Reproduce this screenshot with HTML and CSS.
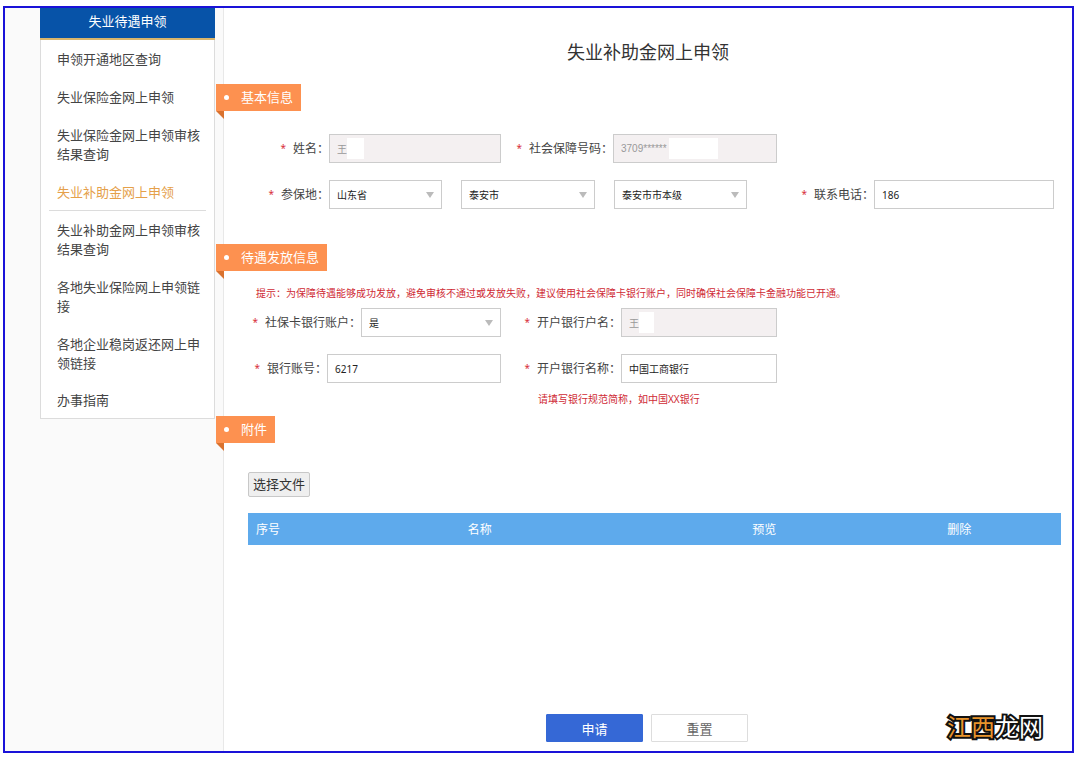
FILE: index.html
```html
<!DOCTYPE html>
<html lang="zh-CN">
<head>
<meta charset="utf-8">
<title>失业补助金网上申领</title>
<link rel="stylesheet" href="styles.css">
</head>
<body>
<div class="frame">
  <aside class="sidebar">
    <nav class="menu">
      <h2 class="menu-title">失业待遇申领</h2>
      <ul class="menu-list">
        <li><a href="#">申领开通地区查询</a></li>
        <li><a href="#">失业保险金网上申领</a></li>
        <li><a href="#">失业保险金网上申领审核结果查询</a></li>
        <li><a href="#" class="active">失业补助金网上申领</a></li>
        <li><a href="#">失业补助金网上申领审核结果查询</a></li>
        <li><a href="#">各地失业保险网上申领链接</a></li>
        <li><a href="#">各地企业稳岗返还网上申领链接</a></li>
        <li><a href="#">办事指南</a></li>
      </ul>
    </nav>
  </aside>
  <main class="main">
    <h1 class="title">失业补助金网上申领</h1>
    <form class="form">
      <section class="section basic">
        <h3 class="tag">基本信息</h3>
        <div class="row row-three">
          <div class="field">
            <label class="wide" for="name"><span class="star">*</span>姓名：</label>
            <div class="control"><input id="name" type="text" value="王" disabled><span class="mask mask-name"></span></div>
          </div>
          <div class="field">
            <label class="id-label" for="idno"><span class="star">*</span>社会保障号码：</label>
            <div class="control"><input id="idno" class="idno" type="text" value="3709******" disabled><span class="mask mask-id"></span></div>
          </div>
        </div>
        <div class="row row-area">
          <div class="field">
            <label class="wide" for="province"><span class="star">*</span>参保地：</label>
            <div class="control select"><select id="province"><option>山东省</option></select></div>
          </div>
          <div class="field next">
            <div class="control select"><select aria-label="市"><option>泰安市</option></select></div>
          </div>
          <div class="field next">
            <div class="control select"><select aria-label="经办机构"><option>泰安市市本级</option></select></div>
          </div>
          <div class="field">
            <label class="phone-label" for="phone"><span class="star">*</span>联系电话：</label>
            <div class="control"><input id="phone" type="text" value="186"></div>
          </div>
        </div>
      </section>
      <section class="section payment">
        <h3 class="tag">待遇发放信息</h3>
        <p class="hint">提示：为保障待遇能够成功发放，避免审核不通过或发放失败，建议使用社会保障卡银行账户，同时确保社会保障卡金融功能已开通。</p>
        <div class="row row-three">
          <div class="field">
            <label class="card-label" for="card"><span class="star">*</span>社保卡银行账户：</label>
            <div class="control select"><select id="card"><option>是</option></select></div>
          </div>
          <div class="field">
            <label class="bank-label" for="holder"><span class="star">*</span>开户银行户名：</label>
            <div class="control"><input id="holder" type="text" value="王" disabled><span class="mask mask-holder"></span></div>
          </div>
        </div>
        <div class="row row-three">
          <div class="field">
            <label class="account-label" for="account"><span class="star">*</span>银行账号：</label>
            <div class="control"><input id="account" type="text" value="6217"></div>
          </div>
          <div class="field">
            <label class="bank-label" for="bank"><span class="star">*</span>开户银行名称：</label>
            <div class="control"><input id="bank" type="text" value="中国工商银行"></div>
          </div>
        </div>
        <div class="row-three">
          <p class="hint bank-hint">请填写银行规范简称，如中国XX银行</p>
        </div>
      </section>
      <section class="section files">
        <h3 class="tag">附件</h3>
        <button type="button" class="choose">选择文件</button>
        <table class="table">
          <thead>
            <tr><th class="col-no">序号</th><th class="col-name">名称</th><th class="col-view">预览</th><th class="col-del">删除</th></tr>
          </thead>
        </table>
      </section>
      <div class="actions">
        <button type="submit" class="btn primary">申请</button>
        <button type="reset" class="btn">重置</button>
      </div>
    </form>
  </main>
  <div class="watermark"><span class="warm">江西</span>龙网</div>
</div>
</body>
</html>
```
FILE: styles.css
```css
* {
  box-sizing: border-box;
}

body {
  margin: 0;
  padding: 6px 6px 5px 3px;
  min-height: 100vh;
  display: flex;
  background: #fff;
  color: #444;
  font-family: "Noto Sans", "Noto Sans CJK SC", sans-serif;
  font-size: 12px;
}

h1, h2, h3, p, ul {
  margin: 0;
  padding: 0;
  font-weight: 400;
}

input, select, button {
  font-family: inherit;
}

.frame {
  position: relative;
  flex: 1;
  display: flex;
  border: 2px solid #1a12d8;
}

/* Sidebar */
.sidebar {
  flex: 0 0 219px;
  padding: 0 8px 0 35px;
  background: #fafafa;
  border-right: 1px solid #e8e8e8;
}

.menu {
  background: #fff;
  border: 1px solid #dcdcdc;
  border-top: 0;
}

.menu-title {
  margin: 0 -1px;
  height: 32px;
  line-height: 26px;
  background: #0753a8;
  border-bottom: 2px solid #d9b56c;
  color: #fff;
  font-size: 13px;
  text-align: center;
}

.menu-list {
  list-style: none;
}

.menu-list a {
  display: block;
  margin: 0 8px;
  padding: 10px 6px 9px 8px;
  color: #444;
  font-size: 13px;
  line-height: 19px;
  text-decoration: none;
}

.menu-list .active {
  padding-bottom: 8px;
  border-bottom: 1px solid #dcdcdc;
  color: #e5a04a;
}

.menu-list li:last-child a {
  padding: 9px 6px 8px 8px;
}

/* Main column */
.main {
  flex: 1;
  display: flex;
  flex-direction: column;
  min-width: 0;
}

.title {
  padding: 31px 0 18px;
  color: #333;
  font-size: 18px;
  line-height: 27px;
  text-align: center;
}

.form {
  flex: 1;
  display: flex;
  flex-direction: column;
}

.section {
  padding: 0 11px 0 24px;
}

.basic {
  min-height: 160px;
}

.payment {
  min-height: 172px;
}

.tag {
  position: relative;
  width: fit-content;
  margin-left: -32px;
  padding: 0 8px 0 25px;
  background: #fd9150;
  color: #fff;
  font-size: 13px;
  line-height: 27px;
}

.tag::before {
  content: "";
  position: absolute;
  left: 8px;
  top: 11px;
  width: 5px;
  height: 5px;
  border-radius: 50%;
  background: #fff;
}

.tag::after {
  content: "";
  position: absolute;
  left: 0;
  top: 100%;
  border-top: 8px solid #d9722f;
  border-left: 8px solid transparent;
}

.row,
.row-three {
  display: grid;
  margin-right: 7px;
}

.row-three {
  grid-template-columns: 253fr 276fr 277fr;
}

.row-area {
  grid-template-columns: 194fr 153fr 152fr 307fr;
}

.basic .row {
  margin-top: 17px;
}

.basic .tag + .row {
  margin-top: 23px;
}

.payment .row + .row {
  margin-top: 17px;
}

.field {
  display: flex;
  align-items: center;
  min-width: 0;
}

.next {
  padding-left: 19px;
}

.field label {
  display: flex;
  flex-shrink: 0;
  justify-content: flex-end;
  line-height: 18px;
  white-space: nowrap;
}

.star {
  margin-right: 7px;
  color: #d8303a;
  font-size: 10px;
  line-height: 16px;
}

.wide {
  width: 81px;
}

.id-label {
  width: 112px;
}

.phone-label {
  width: 127px;
}

.card-label {
  width: 113px;
}

.account-label {
  width: 79px;
}

.bank-label {
  width: 120px;
}

.control {
  position: relative;
  flex: 1;
  min-width: 0;
}

.control input,
.control select {
  display: block;
  width: 100%;
  height: 29px;
  padding: 0 7px;
  appearance: none;
  background: #fff;
  border: 1px solid #ccc;
  border-radius: 0;
  color: #222;
  font-size: 10px;
}

.control input:disabled {
  background: #f4f0f1;
  color: #999;
}

.control .idno {
  font-family: "Liberation Sans", sans-serif;
}

.select::after {
  content: "";
  position: absolute;
  right: 8px;
  top: 12px;
  border-top: 6px solid #bbb;
  border-left: 4px solid transparent;
  border-right: 4px solid transparent;
}

.mask {
  position: absolute;
  top: 4px;
  height: 21px;
  background: #fff;
}

.mask-name {
  left: 18px;
  width: 17px;
}

.mask-id {
  left: 56px;
  width: 49px;
}

.mask-holder {
  left: 18px;
  width: 15px;
}

.hint {
  padding: 15px 0 7px 8px;
  color: #cf2b35;
  font-size: 10px;
  line-height: 15px;
  white-space: nowrap;
}

.bank-hint {
  grid-column: 2;
  padding: 9px 0 0 37px;
}

/* Attachments */
.choose {
  display: block;
  margin: 29px 0 16px;
  height: 25px;
  padding: 0 4px;
  background: #efefef;
  border: 1px solid #c8c8c8;
  border-radius: 2px;
  color: #333;
  font-size: 13px;
  line-height: 21px;
}

.table {
  width: 100%;
  border-collapse: collapse;
  table-layout: fixed;
}

.table th {
  height: 32px;
  padding: 0;
  background: #5eaaec;
  color: #fff;
  font-weight: 400;
  text-align: center;
}

.table .col-no {
  width: 5%;
  padding-left: 8px;
  text-align: left;
}

.table .col-name {
  width: 47%;
}

.table .col-view {
  width: 23%;
}

.table .col-del {
  width: 25%;
}

/* Form buttons */
.actions {
  display: flex;
  justify-content: center;
  gap: 8px;
  margin-top: auto;
  padding: 16px 2px 9px 0;
}

.btn {
  width: 97px;
  height: 28px;
  padding: 0;
  background: #fff;
  border: 1px solid #ddd;
  border-radius: 1px;
  color: #666;
  font-size: 13px;
}

.primary {
  background: #3568d6;
  border-color: #3568d6;
  color: #fff;
}

.watermark {
  position: absolute;
  right: 29px;
  bottom: 6px;
  color: #fff;
  font-size: 24px;
  line-height: 36px;
  -webkit-text-stroke: 4px #111;
  paint-order: stroke fill;
}

.warm {
  color: #e8942c;
}
```
